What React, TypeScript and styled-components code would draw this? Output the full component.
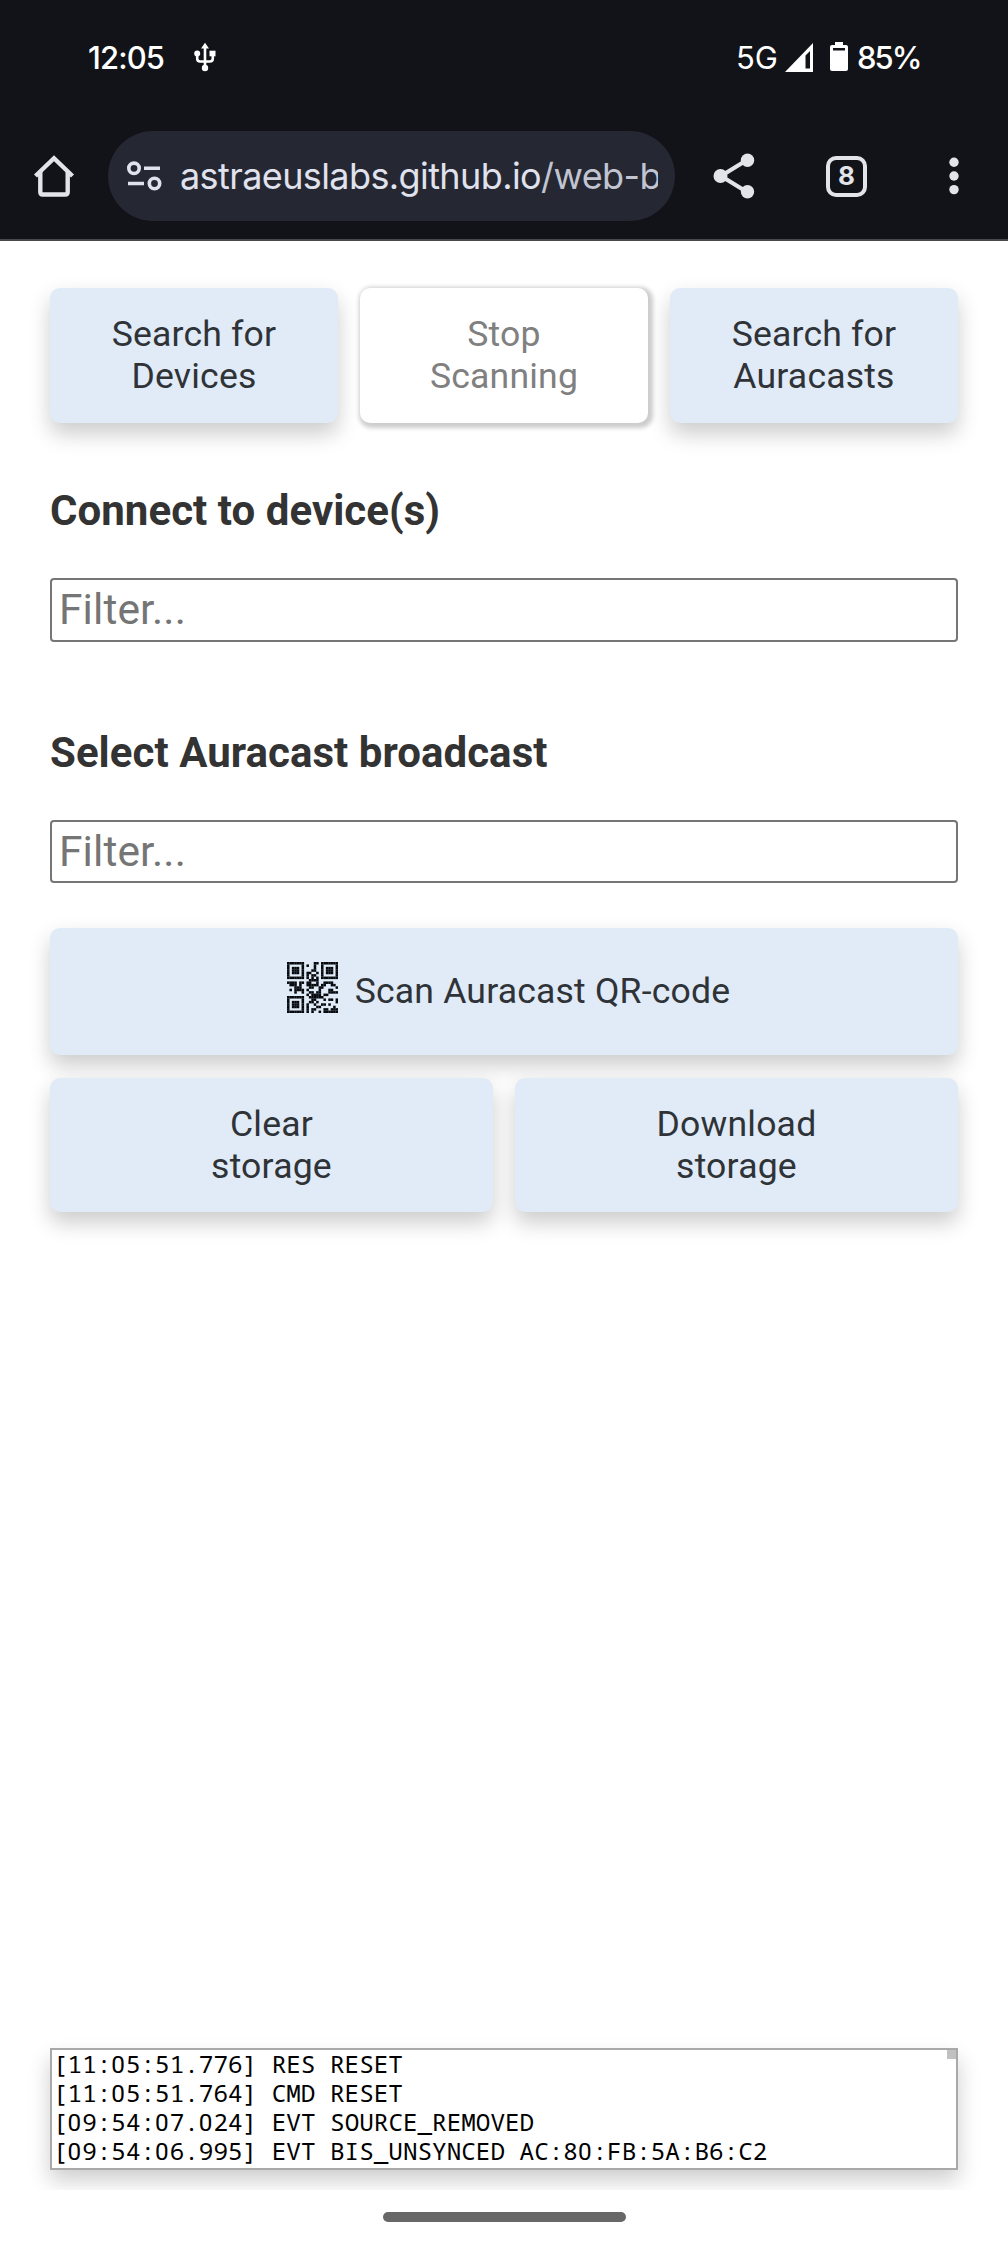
import React from "react";
import styled, { createGlobalStyle } from "styled-components";

const Global = createGlobalStyle`
  *, *::before, *::after { box-sizing: border-box; }
  body { margin: 0; background: #fff; font-family: Roboto, "Liberation Sans", sans-serif; }
`;

const Screen = styled.div`
  width: 1008px;
  height: 2244px;
  display: flex;
  flex-direction: column;
  background: #fff;
  overflow: hidden;
`;

const Chrome = styled.header`
  flex: none;
  height: 241px;
  background: #121318;
  border-bottom: 2px solid #48494d;
  font-family: Inter, Roboto, sans-serif;
`;

const StatusBar = styled.div`
  height: 114px;
  display: flex;
  align-items: center;
  padding: 0 88px 0 88px;
  color: #fff;
  font-size: 31px;
`;

const StatusText = styled.span<{ $width: number; $weight?: number; $spacing?: number; $ml?: number }>`
  flex: none;
  width: ${(p) => p.$width}px;
  margin-left: ${(p) => p.$ml ?? 0}px;
  font-weight: ${(p) => p.$weight ?? 500};
  letter-spacing: ${(p) => p.$spacing ?? 0}px;
  white-space: nowrap;
`;

const Spacer = styled.div`
  flex: 1;
`;

const Toolbar = styled.div`
  height: 125px;
  display: flex;
  align-items: center;
  padding: 0 32px 1px 32px;
`;

const Glyph = styled.svg<{ $ml?: number; $mb?: number }>`
  flex: none;
  display: block;
  margin-left: ${(p) => p.$ml ?? 0}px;
  margin-bottom: ${(p) => p.$mb ?? 0}px;
`;

const AddressBar = styled.div`
  flex: none;
  width: 567px;
  height: 90px;
  margin-left: 32px;
  padding: 0 17px 0 19px;
  display: flex;
  align-items: center;
  gap: 18px;
  border-radius: 45px;
  background: #252832;
`;

const Url = styled.div`
  flex: 1;
  overflow: hidden;
  white-space: nowrap;
  font-size: 36px;
  line-height: 50px;
  letter-spacing: -0.6px;
  color: #e0e2ee;
`;

const UrlPath = styled.span`
  color: #c1c4d1;
`;

const TabCount = styled.div`
  flex: none;
  width: 41px;
  height: 41px;
  margin-left: 71px;
  border: 4.5px solid #e3e3ea;
  border-radius: 10px;
  display: flex;
  align-items: center;
  justify-content: center;
  color: #e3e3ea;
  font-size: 26px;
  font-weight: 700;
  line-height: 1;
`;

const Main = styled.main`
  flex: none;
  height: 1949px;
  padding: 47px 50px 20px;
  display: flex;
  flex-direction: column;
  overflow: hidden;
`;

const ButtonRow = styled.div<{ $mt?: number }>`
  display: flex;
  gap: 22px;
  margin-top: ${(p) => p.$mt ?? 0}px;
`;

const Button = styled.button<{ $height: number }>`
  flex: 1;
  height: ${(p) => p.$height}px;
  padding: 0 20px 1px;
  display: flex;
  align-items: center;
  justify-content: center;
  gap: 17px;
  border: 0;
  border-radius: 10px;
  background: #e0ebf7;
  box-shadow: 0 10.5px 21px rgba(0, 0, 0, 0.2);
  font: 400 35.6px/42px Roboto, "Liberation Sans", sans-serif;
  letter-spacing: 0.18px;
  color: #2f3337;
  text-align: center;
  &:disabled {
    background: #fff;
    color: #808080;
    box-shadow: 2px 2px 4px 2.6px rgba(0, 0, 0, 0.2);
  }
`;

const Heading = styled.h3<{ $mt: number }>`
  margin: ${(p) => p.$mt}px 0 42px;
  font-size: 42px;
  line-height: 50px;
  font-weight: 700;
  letter-spacing: 0.04px;
  color: #333;
`;

const Filter = styled.input<{ $height: number }>`
  flex: none;
  width: 100%;
  height: ${(p) => p.$height}px;
  padding: 0 7px 1px;
  border: 2px solid #767676;
  border-radius: 4px;
  background: #fff;
  font: 400 42.5px/50px Roboto, "Liberation Sans", sans-serif;
  letter-spacing: 0.1px;
  &::placeholder { color: #757575; opacity: 1; }
`;

const Log = styled.div`
  flex: none;
  height: 122px;
  margin-top: auto;
  display: flex;
  justify-content: space-between;
  border: 2px solid #a9a9a9;
  box-shadow: 0 10.5px 21px rgba(0, 0, 0, 0.2);
`;

const LogText = styled.pre`
  margin: -1px 0 0;
  padding-left: 1px;
  font-family: "Noto Sans Mono", "Droid Sans Mono", "DejaVu Sans Mono", monospace;
  font-size: 24.3px;
  line-height: 29px;
  color: #000;
`;

/* Plain, undotted zero padded to the advance of the monospaced face. */
const Zero = styled.span`
  font-family: Roboto, sans-serif;
  letter-spacing: 0.95px;
  line-height: 1;
`;

const Grip = styled.div`
  width: 9px;
  height: 9px;
  background: #c1c1c1;
`;

const NavBar = styled.footer`
  flex: none;
  height: 54px;
  display: flex;
  justify-content: center;
  align-items: flex-start;
  padding-top: 22px;
  background: #fff;
`;

const Handle = styled.div`
  width: 243px;
  height: 10px;
  border-radius: 5px;
  background: #676767;
`;

const QR = [
  "#######....##.#######",
  "#.....#.#..#..#.....#",
  "#.###.#....#..#.###.#",
  "#.###.#...##..#.###.#",
  "#.###.#.##..#.#.###.#",
  "#.....#.#.##..#.....#",
  "#######.#.#.#.#######",
  ".........####........",
  "####.##.##..#..####..",
  ".###.#..#####.##..##.",
  "...###...##..##.....#",
  ".#.####.#....#...##..",
  "...#..#..##.##...####",
  "........#.####.##....",
  "#######..######......",
  "#.....#...##...#.##.#",
  "#.###.#..##.#.......#",
  "#.###.#.#..#..##.#...",
  "#.###.#.#...##.....#.",
  "#.....#.#.##...##.###",
  "#######.#.#..#.######",
];

function QrIcon() {
  return (
    <Glyph $ml={9} $mb={7} width="51" height="51" viewBox="0 0 21 21">
      {QR.flatMap((row, y) =>
        row.split("").map((c, x) =>
          c === "#" ? <rect key={`${x}-${y}`} x={x} y={y} width="1.04" height="1.04" fill="#05080c" /> : null
        )
      )}
    </Glyph>
  );
}

const LOG = [
  "[11:05:51.776] RES RESET",
  "[11:05:51.764] CMD RESET",
  "[09:54:07.024] EVT SOURCE_REMOVED",
  "[09:54:06.995] EVT BIS_UNSYNCED AC:80:FB:5A:B6:C2",
];

function LogLines() {
  return (
    <LogText>
      {LOG.join("\n")
        .split(/(0)/)
        .map((part, i) => (part === "0" ? <Zero key={i}>0</Zero> : part))}
    </LogText>
  );
}

export default function App() {
  return (
    <Screen>
      <Global />
      <Chrome>
        <StatusBar>
          <StatusText $width={106} $spacing={-0.9}>12:05</StatusText>
          <Glyph width="22" height="30" viewBox="0 0 22 30" fill="none" stroke="#fff" strokeWidth="2.6">
            <path d="M11 26V5M3.2 11v5.5q0 3 3 3h9.600q3 0 3-3V11" />
            <path d="M11 .8l4 5.700H7z" fill="#fff" stroke="none" />
            <circle cx="3.200" cy="11.500" r="3" fill="#fff" stroke="none" />
            <path d="M15.500 8.700h6v5.600h-6z" fill="#fff" stroke="none" />
            <circle cx="11" cy="26" r="3.200" fill="#fff" stroke="none" />
          </Glyph>
          <Spacer />
          <StatusText $width={49} $weight={400}>5G</StatusText>
          <Glyph width="28" height="29" viewBox="0 0 28 29">
            <path fillRule="evenodd" fill="#fff" d="M28 0V29H0zM25 8L20.500 12.500V25.500H25z" />
          </Glyph>
          <Glyph $ml={17} width="18" height="30" viewBox="0 0 18 30">
            <path fill="#fff" fillRule="evenodd" d="M5 0h8v3h3q2 0 2 2v22q0 2-2 2H2q-2 0-2-2V5q0-2 2-2h3zM3 6v2.500h12V6z" />
          </Glyph>
          <StatusText $width={63} $ml={9} $spacing={-1.9}>85%</StatusText>
        </StatusBar>
        <Toolbar>
          <Glyph width="44" height="44" viewBox="0 0 44 44" fill="none" stroke="#e3e3ea" strokeWidth="4.400" strokeLinejoin="round">
            <path d="M3.500 22L22 4.200 40.500 22" strokeLinejoin="miter" />
            <path d="M8.300 18v20q0 2.500 2.500 2.500h22.400q2.500 0 2.500-2.500V18" />
          </Glyph>
          <AddressBar>
            <Glyph width="35" height="30" viewBox="0 0 35 30" fill="none" stroke="#e0e2ee" strokeWidth="3.600">
              <circle cx="7" cy="7.300" r="5.200" />
              <path d="M17 7.300h16M1 22.500h16" />
              <circle cx="27.500" cy="22.500" r="5.200" />
            </Glyph>
            <Url>
              astraeuslabs.github.io<UrlPath>/web-b</UrlPath>
            </Url>
          </AddressBar>
          <Glyph $ml={38} width="42" height="46" viewBox="0 0 42 46" fill="#e3e3ea">
            <path d="M34 7L8 23l26 16" fill="none" stroke="#e3e3ea" strokeWidth="4.200" />
            <circle cx="34.500" cy="7.200" r="6.700" />
            <circle cx="7.500" cy="23" r="7" />
            <circle cx="34.500" cy="38.800" r="6.700" />
          </Glyph>
          <TabCount>8</TabCount>
          <Glyph $ml={82} width="10" height="38" viewBox="0 0 10 38" fill="#e3e3ea" overflow="visible">
            <circle cx="5" cy="5.300" r="4.700" />
            <circle cx="5" cy="19" r="4.700" />
            <circle cx="5" cy="32.600" r="4.700" />
          </Glyph>
        </Toolbar>
      </Chrome>
      <Main>
        <ButtonRow>
          <Button $height={135}>Search for<br />Devices</Button>
          <Button $height={135} disabled>Stop<br />Scanning</Button>
          <Button $height={135}>Search for<br />Auracasts</Button>
        </ButtonRow>
        <Heading $mt={63}>Connect to device(s)</Heading>
        <Filter $height={64} placeholder="Filter..." />
        <Heading $mt={86}>Select Auracast broadcast</Heading>
        <Filter $height={63} placeholder="Filter..." />
        <ButtonRow $mt={45}>
          <Button $height={127}>
            <QrIcon />
            Scan Auracast QR-code
          </Button>
        </ButtonRow>
        <ButtonRow $mt={23}>
          <Button $height={134}>Clear<br />storage</Button>
          <Button $height={134}>Download<br />storage</Button>
        </ButtonRow>
        <Log>
          <LogLines />
          <Grip />
        </Log>
      </Main>
      <NavBar>
        <Handle />
      </NavBar>
    </Screen>
  );
}
